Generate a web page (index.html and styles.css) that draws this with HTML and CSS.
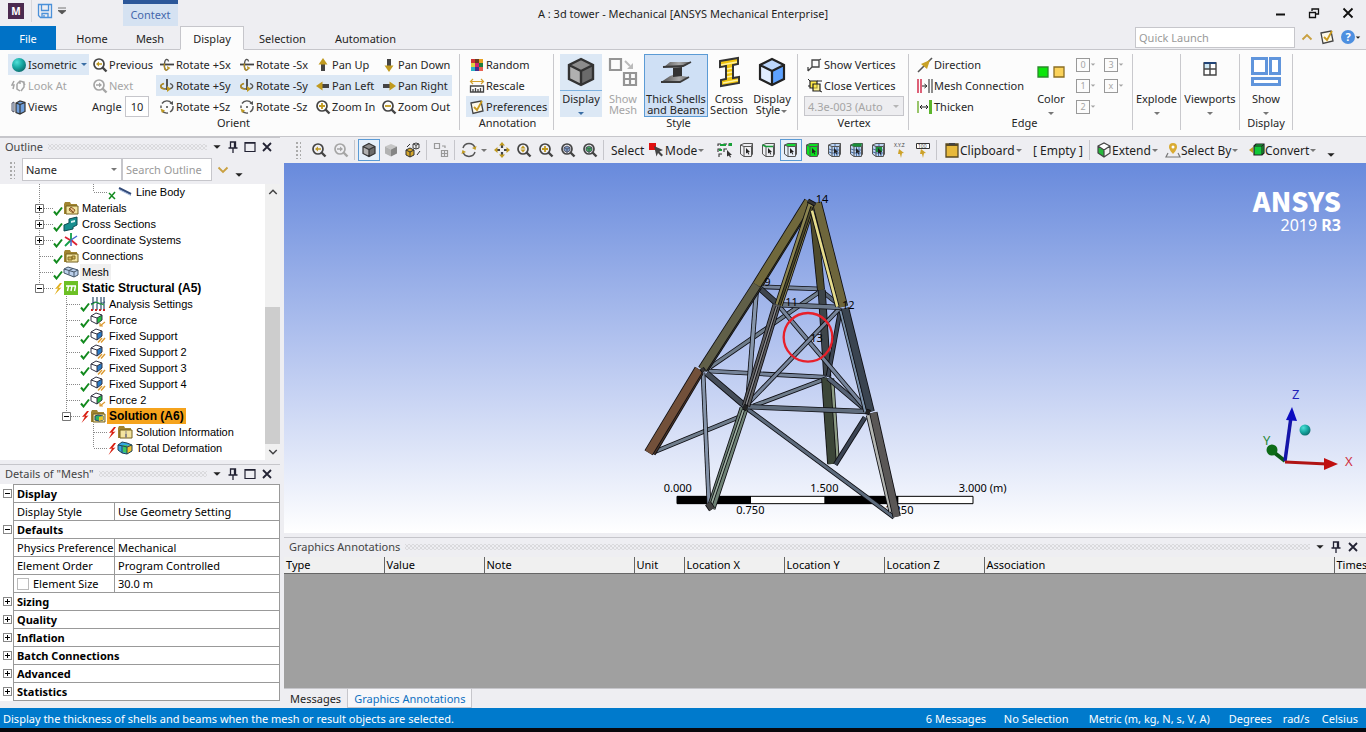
FILE: index.html
```html
<!DOCTYPE html>
<html lang="en">
<head>
    <meta charset="UTF-8">
    <meta name="viewport" content="width=device-width, initial-scale=1.0">
    <title>A : 3d tower - Mechanical [ANSYS Mechanical Enterprise]</title>
    <link rel="stylesheet" href="styles.css">
</head>
<body>
    <!-- Icon sprite -->
    <svg class="sprite" aria-hidden="true">
        <defs>
            <radialGradient id="teal" cx=".35" cy=".3" r=".8"><stop offset="0" stop-color="#4fe0d8"/><stop offset=".5" stop-color="#16a8a2"/><stop offset="1" stop-color="#0b6465"/></radialGradient>
            <linearGradient id="steel" x2="1"><stop offset="0" stop-color="#4a4a4a"/><stop offset=".6" stop-color="#a8a8a8"/><stop offset="1" stop-color="#555"/></linearGradient>
        </defs>
        <symbol id="caret" viewBox="0 0 8 5"><path d="M1 1h6L4 4z" fill="currentColor"/></symbol>
        <symbol id="lens" viewBox="0 0 16 16"><circle cx="7" cy="7" r="5" fill="none" stroke="currentColor" stroke-width="1.7"/><path d="M10.500 10.500L14.500 14.500" stroke="currentColor" stroke-width="2.400"/></symbol>
        <symbol id="zoom-prev" viewBox="0 0 16 16"><use href="#lens"/><path d="M4 7l3-2.500v1.700h3v1.600H7v1.700z" fill="#c09a20"/></symbol>
        <symbol id="zoom-next" viewBox="0 0 16 16"><use href="#lens"/><path d="M10 7L7 4.500v1.700H4v1.600h3v1.700z" fill="currentColor"/></symbol>
        <symbol id="zoom-in" viewBox="0 0 16 16"><use href="#lens"/><path d="M4 7h6M7 4v6" stroke="#c09a20" stroke-width="1.800"/></symbol>
        <symbol id="zoom-out" viewBox="0 0 16 16"><use href="#lens"/><path d="M4 7h6" stroke="#c09a20" stroke-width="1.800"/></symbol>
        <symbol id="zoom-updown" viewBox="0 0 16 16"><use href="#lens"/><path d="M4.500 6.500L7 3.500l2.500 3zM4.500 7.500h5L7 10.500z" fill="#c09a20"/></symbol>
        <symbol id="zoom-fit" viewBox="0 0 16 16"><use href="#lens"/><path d="M4 5.500L7 4l3 1.500v3L7 10.500l-3-2z" fill="#7d9cc8" stroke="#445" stroke-width=".8"/><path d="M4 5.500L7 7l3-1.500M7 7v3.500" stroke="#445" fill="none" stroke-width=".8"/></symbol>
        <symbol id="zoom-sel" viewBox="0 0 16 16"><use href="#lens"/><path d="M4 5.500L7 4l3 1.500v3L7 10.500l-3-2z" fill="#3faa5c" stroke="#445" stroke-width=".8"/><path d="M4 5.500L7 7l3-1.500M7 7v3.500" stroke="#445" fill="none" stroke-width=".8"/></symbol>
        <symbol id="sphere" viewBox="0 0 16 16"><circle cx="8" cy="8" r="7" fill="url(#teal)"/></symbol>
        <symbol id="look-at" viewBox="0 0 16 16"><path d="M3 3L1 7h2l-1 4M6 6l3-3 4 1v5l-3 4M6 6v5l3 2M12 4l2 3M9 3v3" fill="none" stroke="#a5a5a5" stroke-width="1.500"/></symbol>
        <symbol id="views" viewBox="0 0 16 16"><path d="M5 4l4-2 5 1.500v9L9 15l-4-1.500z" fill="#6f9fdc"/><path d="M5 4l4 1.500V15M9 5.500l5-2M5 4v9.500l4 1.500 5-2.500v-9L9 2z" fill="none" stroke="#333" stroke-width="1.200"/><path d="M1 4l2-1v10l-2-1z" fill="#d8e6f8" stroke="#334" stroke-width=".8"/></symbol>
        <symbol id="rot-x" viewBox="0 0 16 16"><path d="M1 7.500h14" stroke="#444" stroke-width="1.800"/><path d="M9.500 4.500C9 1.500 6 1 5.500 6.500S7 15 9 12" fill="none" stroke="#555" stroke-width="1.300"/><path d="M5.500 6.500C4.500 11 6 14 8 13" fill="none" stroke="#b58f22" stroke-width="1.300"/><path d="M8 9l3.500 2-3 2z" fill="#c09a20"/></symbol>
        <symbol id="rot-y" viewBox="0 0 16 16"><path d="M8 1v11" stroke="#444" stroke-width="1.800"/><path d="M5 5.500C0 7 1 11 8 11s7-4 3-5.500" fill="none" stroke="#555" stroke-width="1.300"/><path d="M5 5.500C0 7 1 11 6 11" fill="none" stroke="#b58f22" stroke-width="1.400"/><path d="M8 8l4 3-4 3z" fill="#c09a20"/></symbol>
        <symbol id="rot-z" viewBox="0 0 16 16"><path d="M3 4.500a6 6 0 0 1 9.500-.5M14 7a6 6 0 0 1-3 6M9 14a6 6 0 0 1-6-2.500M2 9V6.500" fill="none" stroke="#555" stroke-width="1.400"/><path d="M14 2v4l-3.500-1.500z" fill="#555"/><path d="M1.500 9.500l4.500 2-3 2.500z" fill="#c09a20"/><circle cx="8" cy="8" r="1" fill="#444"/></symbol>
        <symbol id="arrow" viewBox="0 0 16 16"><path d="M6 6h4v8H6z" fill="#444"/><path d="M8 1l4.500 6.500h-9z" fill="#c09a20"/></symbol>
        <symbol id="random" viewBox="0 0 12 12"><path d="M0 0h4v4H0z" fill="#c33"/><path d="M4 0h4v4H4z" fill="#6a3b1e"/><path d="M8 0h4v4H8z" fill="#e8a020"/><path d="M0 4h4v4H0z" fill="#dcd240"/><path d="M4 4h4v4H4z" fill="#d02070"/><path d="M8 4h4v4H8z" fill="#1d7f3c"/><path d="M0 8h4v4H0z" fill="#28b0c8"/><path d="M4 8h4v4H4z" fill="#45308c"/><path d="M8 8h4v4H8z" fill="#e86050"/></symbol>
        <symbol id="rescale" viewBox="0 0 16 16"><path d="M2 3.500h12M4 1L1.500 3.500 4 6M12 1l2.500 2.500L12 6" fill="none" stroke="#d3a12e" stroke-width="1.200"/><path d="M1.500 8h13v6h-13zM4 14v-3M6.500 14v-4M9 14v-3M11.500 14v-4" fill="none" stroke="#444" stroke-width="1.300"/></symbol>
        <symbol id="prefs" viewBox="0 0 16 16"><path d="M2 4l10-2 2 10-10 2.500z" fill="#fdf8e8" stroke="#444" stroke-width="1.300"/><path d="M5 8l3 3 5-9" fill="none" stroke="#c99a1e" stroke-width="1.800"/></symbol>
        <symbol id="cube-dark" viewBox="0 0 32 32"><path d="M16 3l12 6-12 6L4 9z" fill="#8c8c8c"/><path d="M4 9l12 6v14L4 23z" fill="#b0b0b0"/><path d="M28 9l-12 6v14l12-6z" fill="#6b6b6b"/><path d="M16 3l12 6v14l-12 6-12-6V9zM4 9l12 6 12-6M16 15v14" fill="none" stroke="#333" stroke-width="2.400"/></symbol>
        <symbol id="cube-blue" viewBox="0 0 32 32"><path d="M16 3l12 6-12 6L4 9z" fill="#bcd6fb"/><path d="M4 9l12 6v14L4 23z" fill="#e0edff"/><path d="M28 9l-12 6v14l12-6z" fill="#5ea2ff"/><path d="M16 3l12 6v14l-12 6-12-6V9zM4 9l12 6 12-6M16 15v14" fill="none" stroke="#222" stroke-width="2.200"/></symbol>
        <symbol id="show-mesh" viewBox="0 0 32 32"><path d="M3 3h11v11H3zM17 17h12v12H17zM23 17v12M17 23h12" fill="none" stroke="#959595" stroke-width="2.200"/><path d="M18 5l5 5" stroke="#bbb" stroke-width="2"/><path d="M26 13h-6l6-6z" fill="#bbb"/></symbol>
        <symbol id="beam" viewBox="0 0 32 32"><path d="M10 6h21l-6 4-3 1v9l6 1-9 5H1l9-6 3-1v-7l-9-1z" fill="url(#steel)"/><path d="M13 12l9-1v9l-9 1z" fill="#333"/><path d="M3 11l20-1 8-4M1 26h19l9-5" fill="none" stroke="#3a3a3a" stroke-width="1.800"/></symbol>
        <symbol id="i-beam" viewBox="0 0 32 32"><path d="M7 5l18-3v6l-5 1v13l6-1v6L8 30v-6l5-1V10l-6 1z" fill="#f1c40f" stroke="#333" stroke-width="2"/><path d="M8 9l16-3M14 13l5-1M14 17l5-1M14 21l5-1M10 27l15-3" stroke="#fff3a0" stroke-width="1.400"/></symbol>
        <symbol id="show-vert" viewBox="0 0 16 16"><path d="M5 3h7v7H5zM1 14l4-4M12 3l2-1M1 10v4" fill="none" stroke="#444" stroke-width="1.300"/></symbol>
        <symbol id="close-vert" viewBox="0 0 16 16"><path d="M3 3h7v7H3z" fill="#ffe94a" stroke="#222" stroke-width="1.200"/><path d="M6 6h7v7H6z" fill="#ffe94a" fill-opacity=".6" stroke="#222" stroke-width="1.200"/><path d="M1 1l2 2M13 13l2 1M1 8h2M10 3h5" stroke="#222"/></symbol>
        <symbol id="direction" viewBox="0 0 16 16"><path d="M1 15L15 1" stroke="#555" stroke-width="1.600"/><path d="M13 3l-3 9-6-5z" fill="#c9a227"/></symbol>
        <symbol id="mesh-conn" viewBox="0 0 16 16"><path d="M1 1v14M4 1v14" stroke="#d02040" stroke-width="1.400"/><path d="M12 1v14M15 1v14" stroke="#444" stroke-width="1.200"/><path d="M5 8h4M7.500 6L10 8l-2.500 2" stroke="#222" fill="none"/></symbol>
        <symbol id="thicken" viewBox="0 0 16 16"><path d="M1 2v12" stroke="#6fae2d" stroke-width="1.400"/><path d="M13.500 1v14" stroke="#5cb52c" stroke-width="3"/><path d="M3 8h8M5 6L3 8l2 2M9 6l2 2-2 2" stroke="#222" fill="none"/></symbol>
        <symbol id="colors" viewBox="0 0 28 12"><path d="M1 1h10v10H1z" fill="#0be60b" stroke="#2b8a2b" stroke-width="1.300"/><path d="M17 1h10v10H17z" fill="#fbd25a" stroke="#8a6d22" stroke-width="1.300"/></symbol>
        <symbol id="viewports" viewBox="0 0 16 16"><path d="M2 2h12v12H2z" fill="#fff"/><path d="M2 2h6v6H2z" fill="#cfe8f5"/><path d="M2 2h12v12H2zM8 2v12M2 8h12" fill="none" stroke="#444" stroke-width="1.400"/><path d="M2 2h12" stroke="#247" stroke-width="2"/></symbol>
        <symbol id="show" viewBox="0 0 32 32"><path d="M2.500 2.500h14v15h-14zM20.500 2.500h9v15h-9zM2.500 22.500h27v6h-27z" fill="#fff" stroke="#6095dc" stroke-width="3"/></symbol>
        <symbol id="grid-xfer" viewBox="0 0 16 16"><path d="M1.500 1.500h5v5h-5zM8.500 8.500h6v6h-6zM11.500 8.500v6M8.500 11.500h6M9 4h3v2" fill="none" stroke="#999" stroke-width="1.200"/></symbol>
        <symbol id="cube-flat" viewBox="0 0 32 32"><path d="M16 4l12 5-12 6L4 9z" fill="#c6c6c6"/><path d="M4 9l12 6v14L4 23z" fill="#b2b2b2"/><path d="M28 9l-12 6v14l12-6z" fill="#858585"/></symbol>
        <symbol id="cubes-swap" viewBox="0 0 16 16"><path d="M8 2l3-1 3 1v4l-3 1-3-1zM8 2l3 1.200 3-1.200M11 3v4" fill="#eee" stroke="#444"/><path d="M1 8l4-2 4 2v5l-4 2-4-2z" fill="#d4a62a" stroke="#333"/><path d="M1 8l4 2 4-2M5 10v5M2 5l3-3M12 13l3-4" stroke="#333" fill="none"/></symbol>
        <symbol id="rotate" viewBox="0 0 16 16"><path d="M2 6a6.300 6.300 0 0 1 12 0M2 10a6.300 6.300 0 0 0 12 0" fill="none" stroke="#555" stroke-width="1.500"/><path d="M15.500 4l-1 4-3.500-2zM.5 12l1-4L5 10z" fill="#c09a20"/></symbol>
        <symbol id="pan" viewBox="0 0 16 16"><path d="M8 3v3M8 10v3M3 8h3M10 8h3" stroke="#444" stroke-width="2.200"/><path d="M8 0l3 3.500H5zM8 16l3-3.500H5zM0 8l3.500-3v6zM16 8l-3.500-3v6z" fill="#c09a20"/></symbol>
        <symbol id="mode" viewBox="0 0 16 16"><path d="M0 1h7v7H0z" fill="#e01010"/><path d="M5 4l9 4-3.500 1.500L14 13l-1.500 1.500L9 11l-1.500 3.500z" fill="#444"/></symbol>
        <symbol id="pick-pts" viewBox="0 0 16 16"><path d="M1 4V2h3M7 4V2h3M12 4V2h3M1 10V7h3M7 10V7h3M2 15v-3h3" fill="none" stroke="#333" stroke-width="1.100"/><path d="M3 2h3v2H3zM12 1h3v3h-3zM2 7h3v2H2zM6 2h3v2H6z" fill="#18a038"/><path d="M10 8l5 5-2 0 1 2-1 .5-1-2-2 1z" fill="#333"/></symbol>
        <symbol id="pick-box" viewBox="0 0 16 16"><path d="M1.500 3L5 1.500h8.500V12L12 14.500H5L1.500 12zM5 4.500V14.500M5 4.500L1.500 3M5 4.500h7.500l1-3M12.500 4.500v10" fill="none" stroke="#555"/></symbol>
        <symbol id="pointer" viewBox="0 0 16 16"><path d="M7 6l4 4-1.700.2 1 2-.9.400-1-2L7 11.500z" fill="#222"/></symbol>
        <symbol id="pick-vertex" viewBox="0 0 16 16"><use href="#pick-box"/><use href="#pointer"/></symbol>
        <symbol id="pick-edge" viewBox="0 0 16 16"><use href="#pick-box"/><path d="M1.500 3L5 4.500h7" stroke="#159a35" stroke-width="1.400" fill="none"/><use href="#pointer"/></symbol>
        <symbol id="pick-face" viewBox="0 0 16 16"><path d="M1.500 3L5 1.500h8.500l-1 3H5z" fill="#14d838"/><use href="#pick-box"/><use href="#pointer"/></symbol>
        <symbol id="pick-body" viewBox="0 0 16 16"><path d="M1.500 3L5 1.500h8.500V12L12 14.500H5L1.500 12z" fill="#0be020"/><use href="#pick-box"/><use href="#pointer"/></symbol>
        <symbol id="pick-mesh" viewBox="0 0 16 16"><path d="M1.500 3L5 1.500h8.500V12L12 14.500H5L1.500 12z" fill="#bcd4f2"/><path d="M7.500 4.500v10M10 4.500v10M2 7l3 1h8M2 10l3 1h8M8 1.500v3" stroke="#4a6ea5" fill="none"/><use href="#pick-box"/><use href="#pointer"/></symbol>
        <symbol id="pick-mesh-face" viewBox="0 0 16 16"><use href="#pick-mesh"/><path d="M2 3l3-1.500h8l-1 3H5z" fill="#18903a"/></symbol>
        <symbol id="pick-mesh-el" viewBox="0 0 16 16"><use href="#pick-mesh"/><path d="M5 5h6v5H5z" fill="#18903a"/><use href="#pointer"/></symbol>
        <symbol id="tip" viewBox="0 0 16 16"><path d="M6 7l5 4-2 .3L8 16 7 12l-2 0z" fill="#cda22a"/></symbol>
        <symbol id="clipboard" viewBox="0 0 16 16"><path d="M2 2h12v13H2z" fill="#e7b93c" stroke="#5a4a22" stroke-width="1.300"/><path d="M2 2h12v2H2z" fill="#5a4a22"/><path d="M5 1h6v2H5z" fill="#444"/></symbol>
        <symbol id="extend" viewBox="0 0 16 16"><path d="M2 4l6-3 6 3v7l-6 4-6-4z" fill="#fff"/><path d="M2 5l6 3v7l-6-4z" fill="#25b83c"/><path d="M8 8l6-3v6l-6 4z" fill="#f3f3f3"/><path d="M2 4l6-3 6 3v7l-6 4-6-4zM2 4l6 4 6-4M8 8v7" fill="none" stroke="#444" stroke-width="1.200"/></symbol>
        <symbol id="pin" viewBox="0 0 16 16"><path d="M8 1a4 4 0 0 1 4 4c0 3-4 7-4 7S4 8 4 5a4 4 0 0 1 4-4z" fill="#d9ab33"/><circle cx="8" cy="5" r="1.500" fill="#fff"/><path d="M3 11l-2 4h14l-2-4" fill="none" stroke="#777" stroke-width="1.200"/></symbol>
        <symbol id="convert" viewBox="0 0 16 16"><path d="M5 4l2-2h8v9l-2 2H5z" fill="#10c838" stroke="#222" stroke-width="1.200"/><path d="M5 4h8v9M13 4l2-2" fill="none" stroke="#222"/><path d="M0 8l4-3v6z" fill="#c09a20"/></symbol>
        <symbol id="save" viewBox="0 0 16 16"><path d="M1.500 1.500h13v13h-11l-2-2zM4.500 1.500v6h7v-6M5 14.500v-4h6v4M7 12v2" fill="none" stroke="#4a90d9" stroke-width="1.300"/></symbol>
        <symbol id="push-pin" viewBox="0 0 12 12"><path d="M3.500 1h5v6h-5zM7.500 1v6M1.500 7h9M6 7v5" fill="none" stroke="#223" stroke-width="1.300"/></symbol>
        <symbol id="maxi" viewBox="0 0 12 12"><path d="M1 1.500h10v9H1z" fill="none" stroke="#223" stroke-width="1.200"/><path d="M1 2h10" stroke="#223" stroke-width="1.500"/></symbol>
        <symbol id="close" viewBox="0 0 12 12"><path d="M2 2l8 8M10 2l-8 8" stroke="#223" stroke-width="1.800"/></symbol>
        <symbol id="chev" viewBox="0 0 12 8"><path d="M1.500 1.500L6 6l4.500-4.500" fill="none" stroke="currentColor" stroke-width="1.800"/></symbol>

        <!-- tree guides, one 27x16 cell each -->
        <symbol id="g-v" viewBox="0 0 27 16"><path d="M13.500 0v16" class="dots"/></symbol>
        <symbol id="g-tee" viewBox="0 0 27 16"><path d="M13.500 0v16M14 8.500h13" class="dots"/></symbol>
        <symbol id="g-end" viewBox="0 0 27 16"><path d="M13.500 0v8M14 8.500h13" class="dots"/></symbol>
        <symbol id="g-minus" viewBox="0 0 27 16"><path d="M13.500 0v4M18 8.500h9" class="dots"/><path d="M9.500 4.500h8v8h-8z" fill="#fff" stroke="#777"/><path d="M11 8.500h5" stroke="#000"/></symbol>
        <symbol id="g-plus" viewBox="0 0 27 16"><path d="M13.500 0v16M18 8.500h9" class="dots"/><path d="M9.500 4.500h8v8h-8z" fill="#fff" stroke="#777"/><path d="M11 8.500h5M13.500 6v5" stroke="#000"/></symbol>
        <symbol id="ok" viewBox="0 0 10 16"><path d="M1 11.500l2.500 3L9 7.500" fill="none" stroke="#128a1e" stroke-width="2"/></symbol>
        <symbol id="hidden" viewBox="0 0 10 16"><path d="M2 9l6 6M8 8l-6 7" fill="none" stroke="#128a1e" stroke-width="1.500"/></symbol>
        <symbol id="bolt" viewBox="0 0 10 16"><path d="M7 3L2 9l3-.5L1.500 15l7-7.500-3 .5L9 3z" fill="currentColor"/></symbol>
        <symbol id="line-body" viewBox="0 0 16 16"><path d="M2 4l12 6" stroke="#334a78" stroke-width="2"/><path d="M2 5.500l12 6" stroke="#9fb6dc"/></symbol>
        <symbol id="folder" viewBox="0 0 16 16"><path d="M1 4l1-2h5l1 2h6v10H1z" fill="#a08430"/><path d="M3 6h12v8H3z" fill="#f3e4a0" stroke="#75601e"/></symbol>
        <symbol id="materials" viewBox="0 0 16 16"><use href="#folder"/><path d="M6 8l5 5M8 7l4 3-2 3-4-3z" stroke="#8a5b28" fill="#e8c088"/></symbol>
        <symbol id="sections" viewBox="0 0 16 16"><path d="M1 9l5-2V3l8-2v8l-4 2v2l-9 2z" fill="#178f8f" stroke="#0c4a50"/><path d="M8 5l4-1v2l-4 1z" fill="#d6f2f0"/></symbol>
        <symbol id="coords" viewBox="0 0 16 16"><path d="M8 8V1M8 8L2 14" stroke="#13a04a" stroke-width="1.800"/><path d="M8 8l6 5M2 5l5 3" stroke="#d23" stroke-width="1.800"/><path d="M8 8l6-4M8 8v6" stroke="#46c" stroke-width="1.500"/></symbol>
        <symbol id="connections" viewBox="0 0 16 16"><use href="#folder"/><path d="M5 9h4v3H5zM9 8h3v3H9z" stroke="#856c22" fill="#cdb45c"/></symbol>
        <symbol id="mesh" viewBox="0 0 16 16"><path d="M1 5l4-2 10 3v5l-4 2L1 9z" fill="#bcd0ec"/><path d="M1 5l4-2 10 3v5l-4 2L1 9zM1 5l10 3 4-2M11 8v5M6 6.500v4M6 6.500l4-2" fill="none" stroke="#456" /></symbol>
        <symbol id="structural" viewBox="0 0 16 16"><path d="M1 1h14v14H1z" fill="#6cc024"/><path d="M3 6h10M5.500 6l-1 5M9 6l-1 5M12.500 6l-1 5" stroke="#fff" stroke-width="1.400"/></symbol>
        <symbol id="settings" viewBox="0 0 16 16"><path d="M3 1v13M7 1v13M11 1v13M14 1v13M1 8l4-2 5 2 5-2" fill="none" stroke="#1c4060" stroke-width="1.100"/><path d="M1 14h14" stroke="#c22" stroke-width="2" stroke-dasharray="2 2"/><path d="M1 9l5-3 8 3" stroke="#2a3" fill="none"/></symbol>
        <symbol id="cube-sm" viewBox="0 0 16 16"><path d="M1 4l5-3 6 2v5l-5 4-6-3z" fill="#fff"/><path d="M7 6l5-3v5l-5 4z" fill="currentColor"/><path d="M1 4l5-3 6 2v5l-5 4-6-3zM1 4l6 2 5-3M7 6v6" fill="none" stroke="#334"/></symbol>
        <symbol id="force" viewBox="0 0 16 16"><use href="#cube-sm"/><path d="M15 10l-5 4M10 11v3h3" stroke="#dc9a30" fill="none" stroke-width="1.200"/></symbol>
        <symbol id="support" viewBox="0 0 16 16"><use href="#cube-sm"/><path d="M12 10l-4 4.500M15 10l-4 4.500" stroke="#dc9a30" stroke-width="1.400"/></symbol>
        <symbol id="solution" viewBox="0 0 16 16"><use href="#folder"/><path d="M5 8l3-1 5 1v4l-4 1-4-1z" fill="#30b060" stroke="#247"/><path d="M9 9l4-1v4l-4 1z" fill="#e6c22c"/></symbol>
        <symbol id="info" viewBox="0 0 16 16"><use href="#folder"/><path d="M9 7.500v1M9 9.500v4" stroke="#557" stroke-width="1.300"/></symbol>
        <symbol id="deform" viewBox="0 0 16 16"><path d="M1 5l4-3 5 1 5 2v6l-5 3-5-1-4-3z" fill="#34a8e0"/><path d="M6 5h4v8l-4-1z" fill="#3cc860"/><path d="M10 6l5-1v6l-5 3z" fill="#f0c030"/><path d="M1 5l4-3 5 1 5 2v6l-5 3-5-1-4-3zM1 5l5 1 4 1 5-2M10 7v7M5 6v7" fill="none" stroke="#245"/></symbol>
    </svg>

    <header class="titlebar">
        <div class="quick-access">
            <span class="app-logo">M</span>
            <button class="plain save-btn" aria-label="Save"><svg class="i16"><use href="#save"/></svg></button>
            <button class="plain" aria-label="Customize"><svg width="8" height="8" viewBox="0 0 8 8"><path d="M0 1h8M0 3.500h8L4 7z" fill="#555" stroke="#555" stroke-width=".8"/></svg></button>
        </div>
        <div class="context-tab">Context</div>
        <h1 class="window-title">A : 3d tower - Mechanical [ANSYS Mechanical Enterprise]</h1>
        <div class="window-buttons">
            <button class="plain" aria-label="Minimize"><svg class="i12" viewBox="0 0 12 12"><path d="M2 7.500h9" stroke="#111" stroke-width="2"/></svg></button>
            <button class="plain" aria-label="Restore"><svg class="i12" viewBox="0 0 12 12"><path d="M1.500 5.500h6v5h-6zM1 5.500h7M4 4V2h6.500v5H8M4 2h7" fill="none" stroke="#111" stroke-width="1.300"/></svg></button>
            <button class="plain" aria-label="Close"><svg class="i12" viewBox="0 0 12 12"><path d="M1.500 1.500l9 9M10.500 1.500l-9 9" stroke="#111" stroke-width="1.800"/></svg></button>
        </div>
    </header>

    <nav class="tabs">
        <button class="tab file">File</button>
        <button class="tab w-home">Home</button>
        <button class="tab w-mesh">Mesh</button>
        <button class="tab active">Display</button>
        <button class="tab w-sel">Selection</button>
        <button class="tab w-auto">Automation</button>
        <div class="launch">
            <input type="text" placeholder="Quick Launch" aria-label="Quick Launch">
            <button class="plain gold flip" aria-label="Collapse ribbon"><svg width="12" height="8"><use href="#chev"/></svg></button>
            <button class="plain" aria-label="Options"><svg class="i16"><use href="#prefs"/></svg></button>
            <button class="plain help" aria-label="Help"><span class="help-mark">?</span><svg class="caret"><use href="#caret"/></svg></button>
        </div>
    </nav>

    <section class="ribbon">
        <div class="group orient">
            <div class="orient-grid">
                <button class="cmd lit"><svg class="i16"><use href="#sphere"/></svg>Isometric<svg class="caret push"><use href="#caret"/></svg></button>
                <button class="cmd flush"><svg class="i16"><use href="#zoom-prev"/></svg>Previous</button>
                <button class="cmd"><svg class="i16"><use href="#rot-x"/></svg>Rotate +Sx</button>
                <button class="cmd"><svg class="i16"><use href="#rot-x"/></svg>Rotate -Sx</button>
                <button class="cmd"><svg class="i16"><use href="#arrow"/></svg>Pan Up</button>
                <button class="cmd"><svg class="i16 down"><use href="#arrow"/></svg>Pan Down</button>

                <button class="cmd" disabled><svg class="i16"><use href="#look-at"/></svg>Look At</button>
                <button class="cmd flush" disabled><svg class="i16"><use href="#zoom-next"/></svg>Next</button>
                <button class="cmd lit"><svg class="i16"><use href="#rot-y"/></svg>Rotate +Sy</button>
                <button class="cmd lit"><svg class="i16"><use href="#rot-y"/></svg>Rotate -Sy</button>
                <button class="cmd lit"><svg class="i16 left"><use href="#arrow"/></svg>Pan Left</button>
                <button class="cmd lit"><svg class="i16 right"><use href="#arrow"/></svg>Pan Right</button>

                <button class="cmd"><svg class="i16"><use href="#views"/></svg>Views</button>
                <label class="angle">Angle <input type="text" value="10"></label>
                <button class="cmd"><svg class="i16"><use href="#rot-z"/></svg>Rotate +Sz</button>
                <button class="cmd"><svg class="i16"><use href="#rot-z"/></svg>Rotate -Sz</button>
                <button class="cmd"><svg class="i16"><use href="#zoom-in"/></svg>Zoom In</button>
                <button class="cmd"><svg class="i16"><use href="#zoom-out"/></svg>Zoom Out</button>
            </div>
            <div class="group-name">Orient</div>
        </div>

        <div class="group annotation">
            <div class="stack">
                <button class="cmd"><svg class="i16 pad2"><use href="#random"/></svg>Random</button>
                <button class="cmd"><svg class="i16"><use href="#rescale"/></svg>Rescale</button>
                <button class="cmd lit"><svg class="i16"><use href="#prefs"/></svg>Preferences</button>
            </div>
            <div class="group-name">Annotation</div>
        </div>

        <div class="group style">
            <div class="row">
                <button class="big lit split"><span class="pic"><svg class="i32"><use href="#cube-dark"/></svg></span>Display<svg class="caret"><use href="#caret"/></svg></button>
                <button class="big" disabled><span class="pic"><svg class="i32"><use href="#show-mesh"/></svg></span><span>Show<br>Mesh</span></button>
                <button class="big wide checked"><span class="pic"><svg class="i32"><use href="#beam"/></svg></span><span>Thick Shells<br>and Beams</span></button>
                <button class="big"><span class="pic"><svg class="i32"><use href="#i-beam"/></svg></span><span>Cross<br>Section</span></button>
                <button class="big"><span class="pic"><svg class="i32"><use href="#cube-blue"/></svg></span><span>Display<br>Style<svg class="caret"><use href="#caret"/></svg></span></button>
            </div>
            <div class="group-name">Style</div>
        </div>

        <div class="group vertex">
            <div class="stack">
                <button class="cmd"><svg class="i16"><use href="#show-vert"/></svg>Show Vertices</button>
                <button class="cmd"><svg class="i16"><use href="#close-vert"/></svg>Close Vertices</button>
                <div class="select-box off"><select disabled aria-label="Vertex size"><option>4.3e-003 (Auto</option></select><svg class="caret"><use href="#caret"/></svg></div>
            </div>
            <div class="group-name">Vertex</div>
        </div>

        <div class="group edge">
            <div class="row">
                <div class="stack">
                    <button class="cmd"><svg class="i16"><use href="#direction"/></svg>Direction</button>
                    <button class="cmd"><svg class="i16"><use href="#mesh-conn"/></svg>Mesh Connection</button>
                    <button class="cmd"><svg class="i16"><use href="#thicken"/></svg>Thicken</button>
                </div>
                <button class="big"><span class="pic"><svg width="28" height="12"><use href="#colors"/></svg></span>Color<svg class="caret"><use href="#caret"/></svg></button>
                <div class="minis">
                    <button class="mini" disabled><span>0</span><svg class="caret"><use href="#caret"/></svg></button>
                    <button class="mini" disabled><span>3</span><svg class="caret"><use href="#caret"/></svg></button>
                    <button class="mini" disabled><span>1</span><svg class="caret"><use href="#caret"/></svg></button>
                    <button class="mini" disabled><span>x</span><svg class="caret"><use href="#caret"/></svg></button>
                    <button class="mini" disabled><span>2</span><svg class="caret"><use href="#caret"/></svg></button>
                </div>
            </div>
            <div class="group-name">Edge</div>
        </div>

        <div class="group explode"><button class="big"><span class="pic"></span>Explode<svg class="caret"><use href="#caret"/></svg></button></div>
        <div class="group views"><button class="big"><span class="pic"><svg class="i16"><use href="#viewports"/></svg></span>Viewports<svg class="caret"><use href="#caret"/></svg></button></div>
        <div class="group show">
            <button class="big"><span class="pic"><svg class="i32"><use href="#show"/></svg></span>Show<svg class="caret"><use href="#caret"/></svg></button>
            <div class="group-name">Display</div>
        </div>
    </section>

    <main class="workspace">
        <aside class="side">
            <section class="panel outline">
                <div class="panel-title">
                    <h2>Outline</h2><span class="grip"></span>
                    <button class="plain" aria-label="Menu"><svg class="menu-caret"><use href="#caret"/></svg></button>
                    <button class="plain" aria-label="Auto hide"><svg class="i12"><use href="#push-pin"/></svg></button>
                    <button class="plain" aria-label="Maximize"><svg class="i12"><use href="#maxi"/></svg></button>
                    <button class="plain" aria-label="Close"><svg class="i12"><use href="#close"/></svg></button>
                </div>
                <div class="search-bar">
                    <span class="handle"></span>
                    <div class="select-box"><select aria-label="Search by"><option>Name</option></select><svg class="caret"><use href="#caret"/></svg></div>
                    <input type="text" placeholder="Search Outline" aria-label="Search Outline">
                    <button class="plain gold" aria-label="Expand"><svg width="12" height="8"><use href="#chev"/></svg></button>
                    <button class="plain more" aria-label="More"><svg class="menu-caret"><use href="#caret"/></svg></button>
                </div>
                <div class="tree-wrap">
                    <ul class="tree">
                        <li><svg class="g"><use href="#g-v"/></svg><svg class="g"></svg><svg class="g"><use href="#g-end"/></svg><svg class="st"><use href="#hidden"/></svg><svg class="i16"><use href="#line-body"/></svg><span>Line Body</span></li>
                        <li><svg class="g"><use href="#g-plus"/></svg><svg class="st"><use href="#ok"/></svg><svg class="i16"><use href="#materials"/></svg><span>Materials</span></li>
                        <li><svg class="g"><use href="#g-plus"/></svg><svg class="st"><use href="#ok"/></svg><svg class="i16"><use href="#sections"/></svg><span>Cross Sections</span></li>
                        <li><svg class="g"><use href="#g-plus"/></svg><svg class="st"><use href="#ok"/></svg><svg class="i16"><use href="#coords"/></svg><span>Coordinate Systems</span></li>
                        <li><svg class="g"><use href="#g-tee"/></svg><svg class="st"><use href="#ok"/></svg><svg class="i16"><use href="#connections"/></svg><span>Connections</span></li>
                        <li><svg class="g"><use href="#g-tee"/></svg><svg class="st"><use href="#ok"/></svg><svg class="i16"><use href="#mesh"/></svg><span class="soft">Mesh</span></li>
                        <li><svg class="g"><use href="#g-minus"/></svg><svg class="st yellow"><use href="#bolt"/></svg><svg class="i16"><use href="#structural"/></svg><b>Static Structural (A5)</b></li>
                        <li><svg class="g"></svg><svg class="g"><use href="#g-tee"/></svg><svg class="st"><use href="#ok"/></svg><svg class="i16"><use href="#settings"/></svg><span>Analysis Settings</span></li>
                        <li><svg class="g"></svg><svg class="g"><use href="#g-tee"/></svg><svg class="st"><use href="#ok"/></svg><svg class="i16 green"><use href="#force"/></svg><span>Force</span></li>
                        <li><svg class="g"></svg><svg class="g"><use href="#g-tee"/></svg><svg class="st"><use href="#ok"/></svg><svg class="i16 blue"><use href="#support"/></svg><span>Fixed Support</span></li>
                        <li><svg class="g"></svg><svg class="g"><use href="#g-tee"/></svg><svg class="st"><use href="#ok"/></svg><svg class="i16 blue"><use href="#support"/></svg><span>Fixed Support 2</span></li>
                        <li><svg class="g"></svg><svg class="g"><use href="#g-tee"/></svg><svg class="st"><use href="#ok"/></svg><svg class="i16 blue"><use href="#support"/></svg><span>Fixed Support 3</span></li>
                        <li><svg class="g"></svg><svg class="g"><use href="#g-tee"/></svg><svg class="st"><use href="#ok"/></svg><svg class="i16 blue"><use href="#support"/></svg><span>Fixed Support 4</span></li>
                        <li><svg class="g"></svg><svg class="g"><use href="#g-tee"/></svg><svg class="st"><use href="#ok"/></svg><svg class="i16 green"><use href="#force"/></svg><span>Force 2</span></li>
                        <li><svg class="g"></svg><svg class="g"><use href="#g-minus"/></svg><svg class="st red"><use href="#bolt"/></svg><svg class="i16"><use href="#solution"/></svg><b class="picked">Solution (A6)</b></li>
                        <li><svg class="g"></svg><svg class="g"></svg><svg class="g"><use href="#g-tee"/></svg><svg class="st red"><use href="#bolt"/></svg><svg class="i16"><use href="#info"/></svg><span>Solution Information</span></li>
                        <li><svg class="g"></svg><svg class="g"></svg><svg class="g"><use href="#g-end"/></svg><svg class="st red"><use href="#bolt"/></svg><svg class="i16"><use href="#deform"/></svg><span>Total Deformation</span></li>
                    </ul>
                    <div class="scrollbar">
                        <svg class="flip" width="10" height="8"><use href="#chev"/></svg>
                        <span class="track"></span>
                        <span class="thumb"></span>
                        <svg width="10" height="8"><use href="#chev"/></svg>
                    </div>
                </div>
            </section>

            <section class="panel details">
                <div class="panel-title">
                    <h2>Details of "Mesh"</h2><span class="grip"></span>
                    <button class="plain" aria-label="Menu"><svg class="menu-caret"><use href="#caret"/></svg></button>
                    <button class="plain" aria-label="Auto hide"><svg class="i12"><use href="#push-pin"/></svg></button>
                    <button class="plain" aria-label="Maximize"><svg class="i12"><use href="#maxi"/></svg></button>
                    <button class="plain" aria-label="Close"><svg class="i12"><use href="#close"/></svg></button>
                </div>
                <table class="props">
                    <colgroup><col class="c-toggle"><col class="c-name"><col></colgroup>
                    <tr><td><button class="toggle minus" aria-label="Collapse Display"></button></td><th colspan="2">Display</th></tr>
                    <tr><td></td><td>Display Style</td><td>Use Geometry Setting</td></tr>
                    <tr><td><button class="toggle minus" aria-label="Collapse Defaults"></button></td><th colspan="2">Defaults</th></tr>
                    <tr><td></td><td>Physics Preference</td><td>Mechanical</td></tr>
                    <tr><td></td><td>Element Order</td><td>Program Controlled</td></tr>
                    <tr><td></td><td><label><input type="checkbox">Element Size</label></td><td>30.0 m</td></tr>
                    <tr><td><button class="toggle" aria-label="Expand Sizing"></button></td><th colspan="2">Sizing</th></tr>
                    <tr><td><button class="toggle" aria-label="Expand Quality"></button></td><th colspan="2">Quality</th></tr>
                    <tr><td><button class="toggle" aria-label="Expand Inflation"></button></td><th colspan="2">Inflation</th></tr>
                    <tr><td><button class="toggle" aria-label="Expand Batch Connections"></button></td><th colspan="2">Batch Connections</th></tr>
                    <tr><td><button class="toggle" aria-label="Expand Advanced"></button></td><th colspan="2">Advanced</th></tr>
                    <tr><td><button class="toggle" aria-label="Expand Statistics"></button></td><th colspan="2">Statistics</th></tr>
                </table>
            </section>
        </aside>

        <div class="content">
            <div class="toolbar">
                <span class="handle"></span>
                <button class="tool" aria-label="Previous view"><svg class="i16"><use href="#zoom-prev"/></svg></button>
                <button class="tool" disabled aria-label="Next view"><svg class="i16"><use href="#zoom-next"/></svg></button>
                <span class="sep"></span>
                <button class="tool on" aria-label="Shaded with edges"><svg class="i16"><use href="#cube-dark"/></svg></button>
                <button class="tool" aria-label="Shaded"><svg class="i16"><use href="#cube-flat"/></svg></button>
                <button class="tool" aria-label="Wireframe"><svg class="i16"><use href="#cubes-swap"/></svg></button>
                <span class="sep"></span>
                <button class="tool" aria-label="Show mesh"><svg class="i16"><use href="#grid-xfer"/></svg></button>
                <span class="sep"></span>
                <button class="tool" aria-label="Rotate"><svg class="i16"><use href="#rotate"/></svg></button>
                <button class="drop" aria-label="Rotate options"><svg class="caret"><use href="#caret"/></svg></button>
                <button class="tool" aria-label="Pan"><svg class="i16"><use href="#pan"/></svg></button>
                <button class="tool" aria-label="Zoom"><svg class="i16"><use href="#zoom-updown"/></svg></button>
                <button class="tool" aria-label="Box zoom"><svg class="i16"><use href="#zoom-in"/></svg></button>
                <button class="tool" aria-label="Zoom to fit"><svg class="i16"><use href="#zoom-fit"/></svg></button>
                <button class="tool" aria-label="Zoom to selection"><svg class="i16"><use href="#zoom-sel"/></svg></button>
                <span class="sep"></span>
                <span class="word w-select">Select</span>
                <button class="word-btn w-mode"><svg class="i16"><use href="#mode"/></svg>Mode<svg class="caret"><use href="#caret"/></svg></button>
                <button class="tool" aria-label="Smart select"><svg class="i16"><use href="#pick-pts"/></svg></button>
                <button class="tool" aria-label="Vertex"><svg class="i16"><use href="#pick-vertex"/></svg></button>
                <button class="tool" aria-label="Edge"><svg class="i16"><use href="#pick-edge"/></svg></button>
                <button class="tool on" aria-label="Face"><svg class="i16"><use href="#pick-face"/></svg></button>
                <button class="tool" aria-label="Body"><svg class="i16"><use href="#pick-body"/></svg></button>
                <button class="tool" aria-label="Node"><svg class="i16"><use href="#pick-mesh"/></svg></button>
                <button class="tool" aria-label="Element face"><svg class="i16"><use href="#pick-mesh-face"/></svg></button>
                <button class="tool" aria-label="Element"><svg class="i16"><use href="#pick-mesh-el"/></svg></button>
                <button class="tool" aria-label="Hit point"><svg class="i16" viewBox="0 0 16 16"><text x="1" y="5" class="tiny">X.Y.Z</text><use href="#tip"/></svg></button>
                <button class="tool" aria-label="Label"><svg class="i16" viewBox="0 0 16 16"><path d="M1.500 1.500h13v5h-13z" fill="#fff" stroke="#333"/><text x="3" y="6" class="tiny">100</text><use href="#tip"/></svg></button>
                <span class="sep"></span>
                <button class="word-btn w-clip"><svg class="i16"><use href="#clipboard"/></svg>Clipboard<svg class="caret"><use href="#caret"/></svg></button>
                <span class="word w-empty">[ Empty ]</span>
                <span class="sep"></span>
                <button class="word-btn w-ext"><svg class="i16"><use href="#extend"/></svg>Extend<svg class="caret"><use href="#caret"/></svg></button>
                <button class="word-btn w-by"><svg class="i16"><use href="#pin"/></svg>Select By<svg class="caret"><use href="#caret"/></svg></button>
                <button class="word-btn w-conv"><svg class="i16"><use href="#convert"/></svg>Convert<svg class="caret"><use href="#caret"/></svg></button>
                <button class="plain more" aria-label="More"><svg class="menu-caret"><use href="#caret"/></svg></button>
            </div>

            <div class="viewport">
                <svg class="model" viewBox="0 0 1170 1020">
                    <g id="ruler">
                        <path d="M141 919h888v22H141z" fill="#fff" stroke="#000" stroke-width="3"/>
                        <path d="M141 918h222v24H141zM583 918h222v24H583z"/>
                        <text x="101" y="906">0.000</text>
                        <text x="541" y="906">1.500</text>
                        <text x="986" y="906">3.000 (m)</text>
                        <text x="319" y="972">0.750</text>
                        <text x="766" y="972">2.250</text>
                    </g>
                    <g id="members"></g>
                    <text x="557" y="38">14</text>
                    <text x="403" y="288">9</text>
                    <text x="466" y="348">11</text>
                    <text x="636" y="356">12</text>
                    <text x="541" y="457">13</text>
                    <circle cx="534" cy="442" r="73" fill="none" stroke="#e8202a" stroke-width="7"/>
                </svg>
                <div class="brand"><strong>ANSYS</strong><span>2019 <b>R3</b></span></div>
                <svg class="triad" width="100" height="90" viewBox="0 0 100 90">
                    <path d="M25 76L11 65" stroke="#0a5a14" stroke-width="4"/>
                    <circle cx="12" cy="65" r="5.500" fill="#0d6b18"/>
                    <path d="M25 76L31 32" stroke="#1414a8" stroke-width="3.500"/>
                    <path d="M32 22l5 14-11-1z" fill="#0b0bc0"/>
                    <path d="M25 77l42 2" stroke="#b01414" stroke-width="3"/>
                    <path d="M78 79L64 73v12z" fill="#c01010"/>
                    <circle cx="45" cy="45" r="5.500" fill="url(#teal)"/>
                    <text x="32" y="14" fill="#2020b8">Z</text>
                    <text x="3" y="60" fill="#2a8a3a">Y</text>
                    <text x="85" y="81" fill="#d03040">X</text>
                </svg>
            </div>

            <section class="panel notes">
                <div class="panel-title">
                    <h2>Graphics Annotations</h2><span class="grip"></span>
                    <button class="plain" aria-label="Menu"><svg class="menu-caret"><use href="#caret"/></svg></button>
                    <button class="plain" aria-label="Auto hide"><svg class="i12"><use href="#push-pin"/></svg></button>
                    <button class="plain" aria-label="Close"><svg class="i12"><use href="#close"/></svg></button>
                </div>
                <div class="notes-body">
                    <table class="notes-table">
                        <colgroup><col class="c100"><col class="c100"><col class="c150"><col class="c50"><col class="c100"><col class="c100"><col class="c100"><col class="c350"><col class="c100"></colgroup>
                        <tr><th>Type</th><th>Value</th><th>Note</th><th>Unit</th><th>Location X</th><th>Location Y</th><th>Location Z</th><th>Association</th><th>Timestamp</th></tr>
                    </table>
                </div>
                <div class="bottom-tabs">
                    <button>Messages</button>
                    <button class="current">Graphics Annotations</button>
                </div>
            </section>
        </div>
    </main>

    <footer class="status">
        <span class="hint">Display the thickness of shells and beams when the mesh or result objects are selected.</span>
        <span class="s-msg">6 Messages</span>
        <span class="s-sel">No Selection</span>
        <span class="s-unit">Metric (m, kg, N, s, V, A)</span>
        <span class="s-deg">Degrees</span>
        <span class="s-rad">rad/s</span>
        <span>Celsius</span>
    </footer>
    <div class="taskbar"></div>

    <script>
        // tower members, back to front: x1, y1, x2, y2, width, colour
        const members = [
            [385, 290, 575, 297, 9, '#76849a'],
            [240, 532, 565, 308, 9, '#6f7d8c'],
            [575, 303, 632, 348, 9, '#566274'],
            [550, 70, 573, 300, 19, '#4f4b2c'],
            [575, 300, 592, 560, 19, '#3e454a'],
            [632, 355, 594, 560, 9, '#3b4452'],
            [232, 543, 590, 562, 9, '#76849a'],
            [590, 565, 370, 648, 9, '#6f7d8c'],
            [604, 565, 621, 815, 12, '#8d9c84'],
            [588, 565, 606, 822, 24, '#3c4638'],
            [595, 565, 710, 662, 11, '#566274'],
            [75, 785, 330, 680, 9, '#6f7d8c'],
            [705, 682, 616, 824, 10, '#3b4452'],
            [380, 292, 352, 648, 10, '#8594aa'],
            [388, 294, 440, 340, 14, '#3e454d'],
            [219, 548, 237, 945, 9, '#8594aa'],
            [230, 550, 345, 648, 14, '#454d58'],
            [450, 352, 712, 662, 9, '#76849a'],
            [628, 356, 350, 645, 9, '#76849a'],
            [350, 655, 792, 982, 9, '#5d6b7c'],
            [440, 344, 630, 352, 11, '#6b788a'],
            [345, 650, 715, 665, 11, '#5f6c7c'],
            [545, 42, 394, 285, 8, '#464323'],
            [536, 34, 380, 285, 24, '#70683c'],
            [390, 292, 230, 540, 8, '#3c3c30'],
            [380, 285, 217, 538, 24, '#605f48'],
            [215, 548, 70, 792, 9, '#4a3426'],
            [207, 538, 56, 788, 24, '#72503a'],
            [546, 40, 446, 345, 20, '#8b8450'],
            [546, 50, 448, 345, 5, '#4e4a28'],
            [440, 345, 348, 648, 20, '#5c5c5e'],
            [440, 350, 348, 645, 4, '#8d8d90'],
            [342, 655, 243, 955, 22, '#6e8275'],
            [340, 660, 240, 955, 5, '#9db0a2'],
            [561, 38, 640, 350, 24, '#6e663c'],
            [546, 62, 622, 350, 8, '#e6dc8c'],
            [632, 362, 706, 665, 7, '#7c93ad'],
            [645, 355, 722, 665, 20, '#3a4450'],
            [716, 675, 784, 965, 12, '#b4b6b2'],
            [730, 668, 800, 980, 20, '#5a5756'],
            [234, 940, 246, 958, 16, '#444'],
            [215, 535, 222, 545, 10, '#333'],
            [340, 650, 352, 655, 14, '#222'],
            [708, 664, 720, 668, 12, '#222'],
            [534, 32, 556, 44, 8, '#333']
        ];
        const group = document.getElementById('members');

        function addLine(m, width, colour) {
            const line = document.createElementNS('http://www.w3.org/2000/svg', 'line');
            line.setAttribute('x1', m[0]);
            line.setAttribute('y1', m[1]);
            line.setAttribute('x2', m[2]);
            line.setAttribute('y2', m[3]);
            line.setAttribute('stroke', colour);
            line.setAttribute('stroke-width', width);
            group.appendChild(line);
        }

        for (const m of members) {
            addLine(m, m[4] + 5, '#0c0c10');
            addLine(m, m[4], m[5]);
        }
    </script>
</body>
</html>
```
FILE: styles.css
```css
* {
    box-sizing: border-box;
}
body {
    margin: 0;
    height: 100vh;
    display: flex;
    flex-direction: column;
    overflow: hidden;
    background: #eeeef2;
    color: #1e1e1e;
    font-family: "Noto Sans", "Open Sans", sans-serif;
    font-size: 11px;
}
button, input, select {
    font: inherit;
    color: inherit;
    margin: 0;
    padding: 0;
}
button {
    border: 0;
    background: none;
    white-space: nowrap;
}
svg {
    flex: none;
}
.sprite {
    position: absolute;
    width: 0;
    height: 0;
}
.i16 { width: 16px; height: 16px; color: #444; }
.i12 { width: 12px; height: 12px; }
.i32 { width: 32px; height: 32px; }
.caret { width: 8px; height: 5px; color: #777; }
.menu-caret { width: 10px; height: 6px; color: #222; }
.plain { display: flex; align-items: center; }
.gold { color: #c9a040; }
.flip { transform: rotate(180deg); }
.down { transform: rotate(180deg); }
.left { transform: rotate(-90deg); }
.right { transform: rotate(90deg); }
.pad2 { padding: 2px; }
.dots { fill: none; stroke: #888; stroke-dasharray: 1 1; }

/* title bar */
.titlebar {
    flex: none;
    height: 26px;
    display: flex;
    position: relative;
}
.quick-access {
    width: 123px;
    display: flex;
    align-items: center;
    gap: 5px;
    padding: 0 0 4px 8px;
}
.app-logo {
    width: 16px;
    height: 16px;
    background: #4b2a4f;
    color: #fff;
    font-size: 10px;
    font-weight: bold;
    line-height: 16px;
    text-align: center;
}
.save-btn {
    border-left: 1px solid #d8d8dc;
    padding: 3px 0 3px 5px;
    margin-left: 2px;
}
.context-tab {
    width: 55px;
    border-top: 4px solid #2b579a;
    background: #d5e2f2;
    color: #4668ac;
    line-height: 22px;
    text-align: center;
}
.window-title {
    position: absolute;
    left: 0;
    right: 0;
    margin: 0;
    font-size: 11px;
    font-weight: normal;
    line-height: 28px;
    text-align: center;
    pointer-events: none;
}
.window-buttons {
    margin-left: auto;
    display: flex;
    gap: 22px;
    padding-right: 12px;
}

/* tabs */
.tabs {
    flex: none;
    height: 24px;
    display: flex;
    box-shadow: inset 0 -1px #c6c6cb;
}
.tab {
    border: 1px solid transparent;
}
.tab.file {
    width: 56px;
    background: #0072c6;
    color: #fff;
}
.w-home { width: 72px; }
.w-mesh { width: 52px; margin-right: -4px; padding-right: 8px; }
.w-home + .w-mesh { margin-right: 0; }
.w-sel { width: 77px; }
.w-auto { width: 89px; }
.tab.active {
    width: 64px;
    background: #fcfcfc;
    border-color: #c6c6cb;
    border-bottom-color: #fcfcfc;
}
.launch {
    margin-left: auto;
    display: flex;
    align-items: center;
    gap: 6px;
    padding: 0 5px 2px 0;
}
.launch input {
    width: 160px;
    height: 21px;
    border: 1px solid #c6c6cb;
    background: #fff;
    padding: 0 3px;
}
::placeholder {
    color: #9a9a9a;
}
.help-mark {
    width: 14px;
    height: 14px;
    border-radius: 50%;
    background: #4d8fe0;
    color: #fff;
    font-weight: bold;
    line-height: 14px;
    text-align: center;
}
.help .caret {
    color: #222;
    width: 6px;
}

/* ribbon */
.ribbon {
    flex: none;
    height: 87px;
    display: flex;
    padding: 4px 0 0 8px;
    background: #fcfcfc;
    border-bottom: 1px solid #c6c6cb;
    color: #262626;
}
.group {
    height: 76px;
    border-right: 1px solid #c9c9cd;
}
.orient { width: 452px; }
.annotation { width: 94px; padding: 0 4px 0 6px; }
.style { width: 244px; padding-left: 6px; }
.vertex { width: 111px; padding: 0 4px 0 6px; }
.edge { width: 224px; padding-left: 8px; }
.explode { width: 48px; }
.views { width: 59px; }
.show { width: 53px; }
.orient-grid {
    display: grid;
    grid-template-columns: 84px 64px 80px 76px 66px 74px;
    grid-auto-rows: 21px;
}
.orient-grid .cmd:nth-child(6n+1) {
    width: 81px;
    padding-left: 3px;
}
.group-name {
    line-height: 11px;
    text-align: center;
}
.stack {
    display: grid;
    grid-auto-rows: 21px;
}
.row {
    display: flex;
}
.cmd {
    display: flex;
    align-items: center;
    gap: 1px;
    padding-left: 3px;
}
.cmd.flush {
    padding-left: 0;
}
.push {
    margin-left: auto;
    margin-right: 1px;
}
.lit {
    background: #dce8f5;
}
.lit .caret {
    color: #3a6ea5;
}
button:disabled, button:disabled .i16 {
    color: #a5a5a5;
}
button:disabled .caret {
    color: #a5a5a5;
}
.angle {
    display: flex;
    align-items: center;
    justify-content: space-between;
    padding-right: 7px;
}
.angle input {
    width: 24px;
    height: 21px;
    border: 1px solid #c6c6cb;
    text-align: center;
}
.big {
    width: 42px;
    height: 63px;
    display: flex;
    flex-direction: column;
    align-items: center;
    line-height: 11px;
}
.group > .big { width: 100%; }
.style .big:last-child { width: 44px; }
.pic {
    height: 39px;
    display: flex;
    align-items: flex-start;
    padding-top: 2px;
}
.edge .pic { padding-top: 12px; }
.views .pic { padding-top: 7px; }
.big > .caret {
    margin-top: 7px;
}
.split {
    background: linear-gradient(#dce8f5 36px, #7fb2e0 36px, #7fb2e0 37px, #dce8f5 37px);
}
.wide {
    width: 64px;
}
.checked {
    background: #cfe0f5;
    border: 1px solid #5b9bd5;
}
.checked .pic {
    height: 38px;
    padding-top: 1px;
}
.select-box {
    display: flex;
    align-items: center;
    border: 1px solid #c6c6cb;
    background: #fff;
    padding-right: 3px;
}
.select-box select {
    flex: 1;
    min-width: 0;
    border: 0;
    background: none;
    appearance: none;
    padding-left: 3px;
    opacity: 1;
}
.select-box.off {
    background: #ededf0;
    color: #a5a5a5;
    height: 20px;
}
.off .caret { color: #b5b5b5; }
.edge .stack { width: 113px; }
.edge .cmd { padding-left: 0; }
.minis {
    display: grid;
    grid-template-columns: 28px 28px;
    grid-auto-rows: 21px;
    align-items: center;
    padding-left: 4px;
}
.mini {
    display: flex;
    align-items: center;
}
.mini span {
    width: 14px;
    height: 14px;
    border: 1px solid #999;
    font-size: 9px;
    line-height: 12px;
}
.mini .caret { width: 6px; }

/* panels */
.workspace {
    flex: 1;
    min-height: 0;
    display: flex;
    gap: 4px;
}
.side {
    flex: none;
    width: 280px;
    display: flex;
    flex-direction: column;
}
.panel {
    display: flex;
    flex-direction: column;
}
.outline {
    flex: 1;
    min-height: 0;
    margin-bottom: 4px;
}
.panel-title {
    flex: none;
    height: 20px;
    display: flex;
    align-items: center;
    gap: 5px;
    padding: 0 7px 2px 5px;
    border-top: 1px solid #c6c6cb;
    color: #444;
}
.panel-title h2 {
    margin: 0;
    font-size: 11px;
    font-weight: normal;
}
.grip {
    flex: 1;
    height: 6px;
    background: radial-gradient(#aaa, transparent 1px) 0 0 / 4px 4px, radial-gradient(#aaa, transparent 1px) 2px 2px / 4px 4px;
}
.handle {
    width: 6px;
    height: 18px;
    background: radial-gradient(#aaa 1px, transparent 1px) 0 0 / 4px 4px;
}
.search-bar {
    flex: none;
    height: 27px;
    display: flex;
    align-items: center;
    padding: 0 0 2px 9px;
}
.search-bar .select-box {
    width: 100px;
    height: 23px;
    margin-left: 7px;
}
.search-bar input {
    width: 90px;
    height: 23px;
    border: 1px solid #c6c6cb;
    background: #fff;
    padding: 0 3px;
}
.search-bar .gold { margin-left: 5px; }
.more { margin-left: 5px; padding-top: 10px; }

.tree-wrap {
    flex: 1;
    min-height: 0;
    display: flex;
    background: #fff;
}
.tree {
    flex: 1;
    margin: 0;
    padding: 0 0 0 26px;
    list-style: none;
    overflow: hidden;
    color: #000;
    font-family: "Liberation Sans", Arial, sans-serif;
}
.tree li {
    display: flex;
    align-items: center;
    height: 16px;
    line-height: 16px;
    white-space: nowrap;
}
.tree .g { width: 27px; height: 16px; }
.tree .st { width: 10px; height: 16px; }
.tree span, .tree b { margin-left: 1px; padding: 0 2px; }
.tree b { font-size: 12px; }
.tree .soft { background: #f0f0f0; }
.tree .picked { background: #f5a31c; }
.yellow { color: #e0b020; }
.red { color: #d81e10; }
.green { color: #22c040; }
.blue { color: #2a7cc8; }
.scrollbar {
    width: 15px;
    display: flex;
    flex-direction: column;
    align-items: center;
    gap: 4px;
    padding: 4px 0;
    background: #f0f0f0;
    color: #444;
}
.track { flex: 106; }
.thumb { flex: 142; width: 15px; background: #cdcdcd; }

.props {
    table-layout: fixed;
    width: 280px;
    border-collapse: collapse;
    background: #fff;
    color: #000;
    margin-bottom: 7px;
}
.c-toggle { width: 13px; }
.c-name { width: 101px; }
.props td, .props th {
    height: 18px;
    padding: 0 3px;
    border: 1px solid #999;
    line-height: 17px;
    text-align: left;
    white-space: nowrap;
}
.props td:first-child {
    border-color: transparent #999 transparent transparent;
    padding: 0 2px;
}
.props label {
    display: flex;
    align-items: center;
    gap: 4px;
}
.props input {
    appearance: none;
    width: 12px;
    height: 12px;
    border: 1px solid #bbb;
}
.toggle {
    display: block;
    width: 9px;
    height: 9px;
    border: 1px solid #888;
    background: linear-gradient(#000, #000) center / 5px 1px no-repeat, linear-gradient(#000, #000) center / 1px 5px no-repeat;
}
.toggle.minus {
    background: linear-gradient(#000, #000) center / 5px 1px no-repeat;
}

/* graphics side */
.content {
    flex: 1;
    min-width: 0;
    display: flex;
    flex-direction: column;
}
.toolbar {
    flex: none;
    height: 26px;
    display: flex;
    align-items: center;
    padding-left: 11px;
    font-size: 12px;
}
.toolbar .handle { margin-right: 7px; }
.tool {
    flex: none;
    width: 22px;
    height: 22px;
    padding: 2px 2px 0;
    border: 1px solid transparent;
}
.tool.on {
    background: #e6f0fa;
    border-color: #5b9bd5;
}
.drop {
    width: 11px;
    display: flex;
}
.sep {
    flex: none;
    width: 1px;
    height: 20px;
    margin: 0 3px 0 2px;
    background: #c6c6cb;
}
.word, .word-btn {
    flex: none;
    white-space: nowrap;
}
.word-btn {
    display: flex;
    align-items: center;
}
.w-select { width: 42px; padding-left: 4px; }
.w-mode { width: 65px; }
.w-clip { width: 87px; padding-left: 4px; }
.w-empty { width: 60px; padding-left: 6px; }
.w-ext { width: 72px; padding-left: 3px; }
.w-by { width: 84px; }
.w-conv { width: 71px; }
.toolbar .more { margin-left: 6px; }
.tiny {
    font-size: 5px;
    fill: #444;
}

.viewport {
    flex: 1;
    min-height: 0;
    position: relative;
    overflow: hidden;
    background: linear-gradient(#688adc, #b4c4ef 50%, #fff);
}
.model {
    position: absolute;
    left: calc(50% - 195px);
    top: 27px;
    width: 390px;
    height: 340px;
    font-size: 33px;
}
.brand {
    position: absolute;
    top: 23px;
    right: 25px;
    display: flex;
    flex-direction: column;
    align-items: flex-end;
    color: #fff;
    font-size: 16px;
    line-height: 18px;
}
.brand strong {
    font-family: "Noto Sans CJK SC", "Open Sans", sans-serif;
    font-size: 27px;
    font-weight: 900;
    line-height: 30px;
}
.triad {
    position: absolute;
    right: 6px;
    top: 222px;
    overflow: visible;
    font-size: 13px;
}

.notes {
    margin-top: 4px;
}
.notes-body {
    height: 132px;
    overflow: hidden;
    background: #a0a0a0;
    border-bottom: 1px solid #c6c6cb;
}
.notes-table {
    table-layout: fixed;
    width: 1150px;
    border-collapse: collapse;
    background: #f0f0f0;
    color: #000;
}
.notes-table th {
    height: 16px;
    padding: 0 2px;
    border-right: 1px solid #666;
    border-bottom: 1px solid #666;
    font-weight: normal;
    line-height: 15px;
    text-align: left;
}
.c50 { width: 50px; }
.c100 { width: 100px; }
.c150 { width: 150px; }
.c350 { width: 350px; }
.bottom-tabs {
    height: 19px;
    display: flex;
}
.bottom-tabs button {
    padding: 0 6px;
    line-height: 17px;
}
.bottom-tabs .current {
    background: #f7f7fa;
    border: 1px solid #c6c6cb;
    border-top: 0;
    color: #0e70c0;
}

.status {
    flex: none;
    height: 20px;
    display: flex;
    align-items: center;
    padding: 0 8px 0 3px;
    background: #007acc;
    color: #fff;
    white-space: nowrap;
}
.hint { flex: 1; }
.s-msg { width: 78px; }
.s-sel { width: 85px; }
.s-unit { width: 140px; }
.s-deg { width: 54px; }
.s-rad { width: 39px; }
.taskbar {
    flex: none;
    height: 4px;
    background: #08080c;
}
```
